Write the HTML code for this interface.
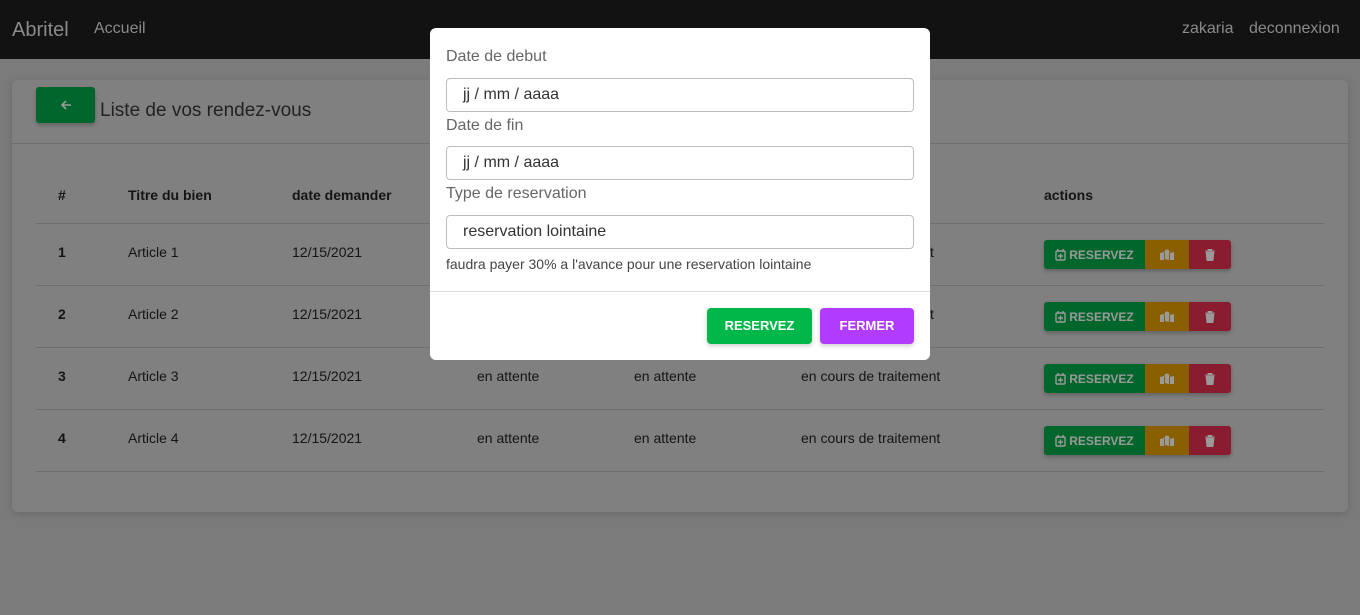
<!DOCTYPE html>
<html><head><style>
*{box-sizing:border-box;margin:0;padding:0}
body{width:1360px;height:615px;background:#7b7b7b;font-family:"Liberation Sans",Arial,sans-serif;position:relative;overflow:hidden}
.nav{position:absolute;left:0;top:0;width:1360px;height:59px;background:#121212}
.nav span{position:absolute;color:#8a8a8a;top:20px}
.card{position:absolute;left:12px;top:80px;width:1336px;height:432px;background:#808080;border-radius:6px;box-shadow:0 2px 8px rgba(0,0,0,.15)}
.back{position:absolute;left:36px;top:87px;width:59px;height:36px;background:#00662b;border-radius:3px;box-shadow:0 2px 4px rgba(0,0,0,.25);display:flex;align-items:center;justify-content:center}
.title{position:absolute;left:100px;top:100px;font-size:19px;color:#222}
.hr{position:absolute;height:1px;background:#6d6d6d}
.t{position:absolute;font-size:14px;color:#141414}
.b{font-weight:bold}
.btns{position:absolute;left:1044px;height:29px;width:187px;border-radius:3px;overflow:hidden;display:flex;box-shadow:0 2px 4px rgba(0,0,0,.25)}
.btns div{height:29px;display:flex;align-items:center;justify-content:center;color:#9a9a9a;font-size:12px;font-weight:bold;gap:3px}
.modal{position:absolute;left:430px;top:28px;width:500px;height:332px;background:#fff;border-radius:6px}
.lbl{position:absolute;left:16px;font-size:16px;color:#666}
.inp{position:absolute;left:16px;width:468px;height:34px;border:1px solid #bdbdbd;border-radius:4px;font-size:16px;color:#333;padding:7px 0 0 16px}
.mb{position:absolute;top:280px;height:36px;border-radius:4px;color:#fff;font-size:13px;font-weight:bold;text-align:center;line-height:36px;box-shadow:0 2px 5px rgba(0,0,0,.2)}
</style></head><body>
<div class="nav"><span style="left:12px;font-size:20px;top:19px">Abritel</span><span style="left:94px;font-size:16px">Accueil</span><span style="left:1182px;font-size:16px">zakaria</span><span style="left:1249px;font-size:16px">deconnexion</span></div>
<div class="card"></div>
<div class="back"><svg width="12" height="12" viewBox="0 0 12 12"><path d="M11 6H2M6 2L2 6l4 4" stroke="#9a9a9a" stroke-width="1.6" fill="none"/></svg></div>
<div class="title">Liste de vos rendez-vous</div>
<div class="hr" style="left:12px;width:1336px;top:143px"></div>
<div class="t b" style="left:58px;top:187px">#</div>
<div class="t b" style="left:128px;top:187px">Titre du bien</div>
<div class="t b" style="left:292px;top:187px">date demander</div>
<div class="t b" style="left:1044px;top:187px">actions</div>
<div class="hr" style="left:36px;width:1288px;top:223px"></div>

<div class="t b" style="left:58px;top:244px">1</div><div class="t" style="left:128px;top:244px">Article 1</div><div class="t" style="left:292px;top:244px">12/15/2021</div><div class="t" style="left:930px;top:244px">t</div>
<div class="t b" style="left:58px;top:306px">2</div><div class="t" style="left:128px;top:306px">Article 2</div><div class="t" style="left:292px;top:306px">12/15/2021</div><div class="t" style="left:930px;top:306px">t</div>
<div class="t b" style="left:58px;top:368px">3</div><div class="t" style="left:128px;top:368px">Article 3</div><div class="t" style="left:292px;top:368px">12/15/2021</div><div class="t" style="left:477px;top:368px">en attente</div><div class="t" style="left:634px;top:368px">en attente</div><div class="t" style="left:801px;top:368px">en cours de traitement</div>
<div class="t b" style="left:58px;top:430px">4</div><div class="t" style="left:128px;top:430px">Article 4</div><div class="t" style="left:292px;top:430px">12/15/2021</div><div class="t" style="left:477px;top:430px">en attente</div><div class="t" style="left:634px;top:430px">en attente</div><div class="t" style="left:801px;top:430px">en cours de traitement</div>
<div class="hr" style="left:36px;width:1288px;top:285px"></div>
<div class="hr" style="left:36px;width:1288px;top:347px"></div>
<div class="hr" style="left:36px;width:1288px;top:409px"></div>
<div class="hr" style="left:36px;width:1288px;top:471px"></div>

<div class="btns" style="top:240px"><div style="width:101px;background:#00662b"><svg width="11" height="12" viewBox="0 0 11 12"><rect x="1" y="2" width="9" height="9" rx="1" stroke="#9a9a9a" stroke-width="1.4" fill="none"/><path d="M3 0v3M8 0v3M5.5 4.5v5M3 7h5" stroke="#9a9a9a" stroke-width="1.4"/></svg>RESERVEZ</div><div style="width:44px;background:#8a5f00"><svg width="14" height="11" viewBox="0 0 14 11"><path d="M0 4l4-1v8l-4 0zM5 3l4 1v7l-4-1zM10 4l4-1v8l-4 0z" fill="#9a9a9a"/><circle cx="7" cy="3" r="2.5" fill="#9a9a9a"/></svg></div><div style="width:42px;background:#891c2e"><svg width="10" height="12" viewBox="0 0 10 12"><path d="M0 2h10M3 2V0h4v2M1 3h8l-1 9H2z" fill="#9a9a9a" stroke="#9a9a9a" stroke-width=".8"/></svg></div></div>
<div class="btns" style="top:302px"><div style="width:101px;background:#00662b"><svg width="11" height="12" viewBox="0 0 11 12"><rect x="1" y="2" width="9" height="9" rx="1" stroke="#9a9a9a" stroke-width="1.4" fill="none"/><path d="M3 0v3M8 0v3M5.5 4.5v5M3 7h5" stroke="#9a9a9a" stroke-width="1.4"/></svg>RESERVEZ</div><div style="width:44px;background:#8a5f00"><svg width="14" height="11" viewBox="0 0 14 11"><path d="M0 4l4-1v8l-4 0zM5 3l4 1v7l-4-1zM10 4l4-1v8l-4 0z" fill="#9a9a9a"/><circle cx="7" cy="3" r="2.5" fill="#9a9a9a"/></svg></div><div style="width:42px;background:#891c2e"><svg width="10" height="12" viewBox="0 0 10 12"><path d="M0 2h10M3 2V0h4v2M1 3h8l-1 9H2z" fill="#9a9a9a" stroke="#9a9a9a" stroke-width=".8"/></svg></div></div>
<div class="btns" style="top:364px"><div style="width:101px;background:#00662b"><svg width="11" height="12" viewBox="0 0 11 12"><rect x="1" y="2" width="9" height="9" rx="1" stroke="#9a9a9a" stroke-width="1.4" fill="none"/><path d="M3 0v3M8 0v3M5.5 4.5v5M3 7h5" stroke="#9a9a9a" stroke-width="1.4"/></svg>RESERVEZ</div><div style="width:44px;background:#8a5f00"><svg width="14" height="11" viewBox="0 0 14 11"><path d="M0 4l4-1v8l-4 0zM5 3l4 1v7l-4-1zM10 4l4-1v8l-4 0z" fill="#9a9a9a"/><circle cx="7" cy="3" r="2.5" fill="#9a9a9a"/></svg></div><div style="width:42px;background:#891c2e"><svg width="10" height="12" viewBox="0 0 10 12"><path d="M0 2h10M3 2V0h4v2M1 3h8l-1 9H2z" fill="#9a9a9a" stroke="#9a9a9a" stroke-width=".8"/></svg></div></div>
<div class="btns" style="top:426px"><div style="width:101px;background:#00662b"><svg width="11" height="12" viewBox="0 0 11 12"><rect x="1" y="2" width="9" height="9" rx="1" stroke="#9a9a9a" stroke-width="1.4" fill="none"/><path d="M3 0v3M8 0v3M5.5 4.5v5M3 7h5" stroke="#9a9a9a" stroke-width="1.4"/></svg>RESERVEZ</div><div style="width:44px;background:#8a5f00"><svg width="14" height="11" viewBox="0 0 14 11"><path d="M0 4l4-1v8l-4 0zM5 3l4 1v7l-4-1zM10 4l4-1v8l-4 0z" fill="#9a9a9a"/><circle cx="7" cy="3" r="2.5" fill="#9a9a9a"/></svg></div><div style="width:42px;background:#891c2e"><svg width="10" height="12" viewBox="0 0 10 12"><path d="M0 2h10M3 2V0h4v2M1 3h8l-1 9H2z" fill="#9a9a9a" stroke="#9a9a9a" stroke-width=".8"/></svg></div></div>

<div class="modal">
<div class="lbl" style="top:20px">Date de debut</div>
<div class="inp" style="top:50px">jj / mm / aaaa</div>
<div class="lbl" style="top:89px">Date de fin</div>
<div class="inp" style="top:118px">jj / mm / aaaa</div>
<div class="lbl" style="top:157px">Type de reservation</div>
<div class="inp" style="top:187px">reservation lointaine</div>
<div style="position:absolute;left:16px;top:228px;font-size:14px;color:#444">faudra payer 30% a l'avance pour une reservation lointaine</div>
<div style="position:absolute;left:0;top:263px;width:500px;height:1px;background:#e0e0e0"></div>
<div class="mb" style="left:277px;width:105px;background:#00b74a">RESERVEZ</div>
<div class="mb" style="left:390px;width:94px;background:#b23cfd">FERMER</div>
</div>
</body></html>
